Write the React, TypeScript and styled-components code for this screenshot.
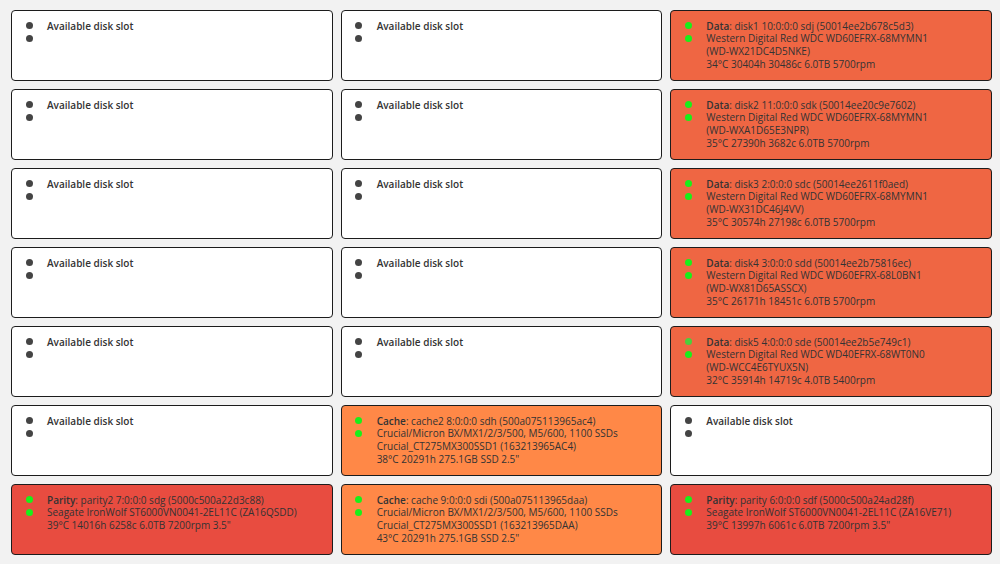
import React from 'react';
import styled, { createGlobalStyle } from 'styled-components';

const GlobalStyle = createGlobalStyle`
  html, body {
    margin: 0;
    padding: 0;
    background: #f2f2f2;
  }
  body {
    font-family: 'Open Sans', 'Noto Sans', 'Liberation Sans', sans-serif;
  }
`;

type Kind = 'empty' | 'data' | 'cache' | 'parity';

const fills: Record<Kind, string> = {
  empty: '#ffffff',
  data: '#ef6643',
  cache: '#ff8847',
  parity: '#e84c40',
};

const SlotGrid = styled.div`
  display: grid;
  grid-template-columns: repeat(3, 1fr);
  grid-auto-rows: 71px;
  column-gap: 8px;
  row-gap: 8px;
  padding: 10px 8px 0 11px;
  width: 1000px;
  box-sizing: border-box;
`;

const Slot = styled.div<{ kind: Kind }>`
  background: ${(p) => fills[p.kind]};
  border: 1.5px solid #1c1c1c;
  border-radius: 4px;
  box-sizing: border-box;
  display: flex;
  padding: 8.5px 0 0 13.5px;
  color: #333333;
  font-size: 10px;
  line-height: 12.7px;
`;

const Leds = styled.div`
  display: flex;
  flex-direction: column;
  width: 21.5px;
  flex: none;
`;

const Led = styled.span<{ color: string }>`
  display: flex;
  align-items: center;
  height: 12.7px;

  &::before {
    content: '';
    width: 7px;
    height: 7px;
    border-radius: 50%;
    background: ${(p) => p.color};
  }
`;

const Info = styled.div`
  display: flex;
  flex-direction: column;
  white-space: nowrap;
`;

const Line = styled.div`
  height: 12.7px;
`;

const Title = styled.b`
  font-weight: 600;
`;

type SlotInfo = {
  kind: Kind;
  leds?: [string, string];
  title?: string;
  lines: string[];
};

const EMPTY: SlotInfo = { kind: 'empty', lines: [] };
const GREEN = '#19ef1a';
const GRAY = '#444444';

const data = (lines: string[], first = GREEN): SlotInfo => ({
  kind: 'data',
  leds: [first, GREEN],
  title: 'Data',
  lines,
});

const cache = (lines: string[]): SlotInfo => ({
  kind: 'cache',
  leds: [GREEN, GREEN],
  title: 'Cache',
  lines,
});

const parity = (lines: string[]): SlotInfo => ({
  kind: 'parity',
  leds: [GREEN, GREEN],
  title: 'Parity',
  lines,
});

const slots: SlotInfo[] = [
  EMPTY, EMPTY, data([
    'disk1 10:0:0:0 sdj (50014ee2b678c5d3)',
    'Western Digital Red WDC WD60EFRX-68MYMN1',
    '(WD-WX21DC4D5NKE)',
    '34°C 30404h 30486c 6.0TB 5700rpm',
  ]),
  EMPTY, EMPTY, data([
    'disk2 11:0:0:0 sdk (50014ee20c9e7602)',
    'Western Digital Red WDC WD60EFRX-68MYMN1',
    '(WD-WXA1D65E3NPR)',
    '35°C 27390h 3682c 6.0TB 5700rpm',
  ]),
  EMPTY, EMPTY, data([
    'disk3 2:0:0:0 sdc (50014ee2611f0aed)',
    'Western Digital Red WDC WD60EFRX-68MYMN1',
    '(WD-WX31DC46J4VV)',
    '35°C 30574h 27198c 6.0TB 5700rpm',
  ]),
  EMPTY, EMPTY, data([
    'disk4 3:0:0:0 sdd (50014ee2b75816ec)',
    'Western Digital Red WDC WD60EFRX-68L0BN1',
    '(WD-WX81D65ASSCX)',
    '35°C 26171h 18451c 6.0TB 5700rpm',
  ]),
  EMPTY, EMPTY, data([
    'disk5 4:0:0:0 sde (50014ee2b5e749c1)',
    'Western Digital Red WDC WD40EFRX-68WT0N0',
    '(WD-WCC4E6TYUX5N)',
    '32°C 35914h 14719c 4.0TB 5400rpm',
  ], '#4ccf3c'),
  EMPTY, cache([
    'cache2 8:0:0:0 sdh (500a075113965ac4)',
    'Crucial/Micron BX/MX1/2/3/500, M5/600, 1100 SSDs',
    'Crucial_CT275MX300SSD1 (163213965AC4)',
    '38°C 20291h 275.1GB SSD 2.5"',
  ]), EMPTY,
  parity([
    'parity2 7:0:0:0 sdg (5000c500a22d3c88)',
    'Seagate IronWolf ST6000VN0041-2EL11C (ZA16QSDD)',
    '39°C 14016h 6258c 6.0TB 7200rpm 3.5"',
  ]),
  cache([
    'cache 9:0:0:0 sdi (500a075113965daa)',
    'Crucial/Micron BX/MX1/2/3/500, M5/600, 1100 SSDs',
    'Crucial_CT275MX300SSD1 (163213965DAA)',
    '43°C 20291h 275.1GB SSD 2.5"',
  ]),
  parity([
    'parity 6:0:0:0 sdf (5000c500a24ad28f)',
    'Seagate IronWolf ST6000VN0041-2EL11C (ZA16VE71)',
    '39°C 13997h 6061c 6.0TB 7200rpm 3.5"',
  ]),
];

const DiskSlot = ({ slot }: { slot: SlotInfo }) => {
  const leds = slot.leds ?? [GRAY, GRAY];
  return (
    <Slot kind={slot.kind}>
      <Leds>
        <Led color={leds[0]} />
        <Led color={leds[1]} />
      </Leds>
      <Info>
        {slot.kind === 'empty' ? (
          <Line><Title>Available disk slot</Title></Line>
        ) : (
          slot.lines.map((text, i) => (
            <Line key={i}>
              {i === 0 && <><Title>{slot.title}</Title>: </>}
              {text}
            </Line>
          ))
        )}
      </Info>
    </Slot>
  );
};

export default function App() {
  return (
    <>
      <GlobalStyle />
      <SlotGrid>
        {slots.map((slot, i) => (
          <DiskSlot key={i} slot={slot} />
        ))}
      </SlotGrid>
    </>
  );
}
